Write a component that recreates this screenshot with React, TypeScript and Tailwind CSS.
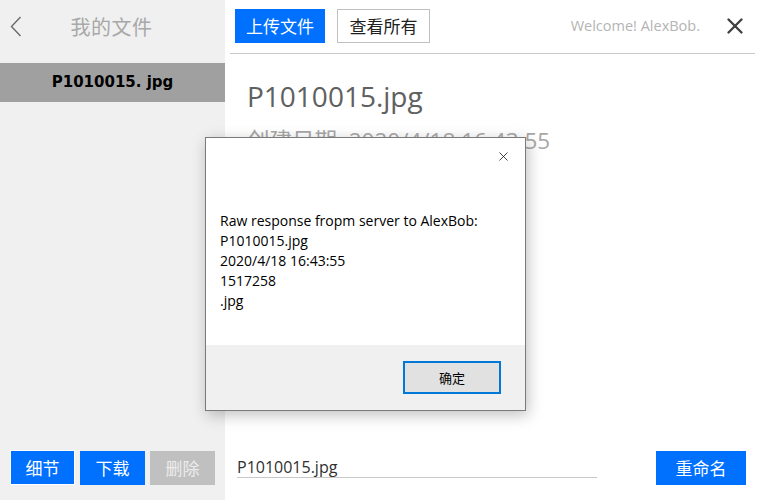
import { X } from 'lucide-react';

const cjk = "font-['Microsoft_YaHei','Noto_Sans_CJK_SC',sans-serif]";
const ui = "font-['Open_Sans','Noto_Sans_CJK_SC',sans-serif]";

function Sidebar() {
  return (
    <aside className="w-[225px] h-full bg-[#f0f0f0] flex flex-col">
      {/* header */}
      <div className="h-[63px] flex items-center pb-[10px] relative">
        <svg className="absolute left-[10px] top-[16px]" width="12" height="21" viewBox="0 0 12 21">
          <polyline points="10.5,1 1.5,10.5 10.5,20" fill="none" stroke="#6a6a6a" strokeWidth="1.4" />
        </svg>
        <span className={`${cjk} mx-auto pr-[2px] text-[20px] tracking-[0.5px] text-[#a8a8a8]`}>我的文件</span>
      </div>

      {/* selected file */}
      <div className="h-[39px] bg-[#a0a0a0] flex items-center justify-center">
        <span className="font-['DejaVu_Sans',sans-serif] font-bold text-[15px] text-black">P1010015. jpg</span>
      </div>

      <div className="flex-1" />

      {/* actions */}
      <div className={`${cjk} flex items-center gap-[5px] pl-[10px] pb-[15px] text-[17px]`}>
        <button className="w-[65px] h-[35px] bg-[#0070ff] border border-white text-white">细节</button>
        <button className="w-[65px] h-[34px] bg-[#0070ff] text-white">下载</button>
        <button className="w-[65px] h-[34px] bg-[#c0c0c0] text-[#ececec]">删除</button>
      </div>
    </aside>
  );
}

function MessageBox() {
  return (
    <div className="absolute left-[205px] top-[137px] w-[321px] h-[274px] bg-white border border-[#7a7a7a] shadow-[2px_4px_14px_rgba(0,0,0,0.25)] flex flex-col">
      <div className="flex-1 relative">
        <X className="absolute right-[14px] top-[11px]" size={15} strokeWidth={1.3} color="#1a1a1a" />
        <div className={`${ui} pt-[73px] pl-[14px] text-[14px] leading-[20px] text-black`}>
          <p>Raw response fropm server to AlexBob:</p>
          <p>P1010015.jpg</p>
          <p>2020/4/18 16:43:55</p>
          <p>1517258</p>
          <p>.jpg</p>
        </div>
      </div>
      <div className="h-[65px] bg-[#f0f0f0] flex items-center justify-end pr-[24px]">
        <button className={`${cjk} w-[98px] h-[33px] bg-[#e1e1e1] border-2 border-[#0078d7] text-[13px] text-black`}>确定</button>
      </div>
    </div>
  );
}

function App() {
  return (
    <div className="w-[760px] h-[500px] flex relative overflow-hidden bg-white">
      <Sidebar />

      {/* main */}
      <main className="flex-1 flex flex-col">
        <div className="mx-[5px] h-[54px] border-b border-[#c8c8c8] flex items-center pl-[5px] pr-[7px] pb-[2px]">
          <button className={`${cjk} w-[90px] h-[34px] bg-[#0070ff] text-white text-[17px]`}>上传文件</button>
          <button className={`${cjk} ml-[12px] w-[93px] h-[34px] bg-white border border-[#c0c0c0] text-[#202020] text-[17px]`}>查看所有</button>
          <span className={`${ui} ml-auto text-[14.5px] text-[#b4b4b4]`}>Welcome! AlexBob.</span>
          <X className="ml-[22px]" size={26} strokeWidth={2.2} color="#404040" />
        </div>

        <div className="pl-[22px] pt-[22px]">
          <h1 className={`${ui} text-[28px] text-[#606060] leading-[40px]`}>P1010015.jpg</h1>
          <p className={`${ui} mt-[8px] text-[22.5px] text-[#a8a8a8]`}>创建日期: 2020/4/18 16:43:55</p>
        </div>

        <div className="flex-1" />

        <div className="flex items-end justify-between pl-[12px] pr-[14px] pb-[15px]">
          <div className={`${ui} mb-[7px] w-[360px] border-b border-[#c8c8c8] text-[16px] text-[#303030] leading-[20px]`}>P1010015.jpg</div>
          <button className={`${cjk} w-[90px] h-[34px] bg-[#0070ff] text-white text-[17px]`}>重命名</button>
        </div>
      </main>

      <MessageBox />
    </div>
  );
}

export default App;
